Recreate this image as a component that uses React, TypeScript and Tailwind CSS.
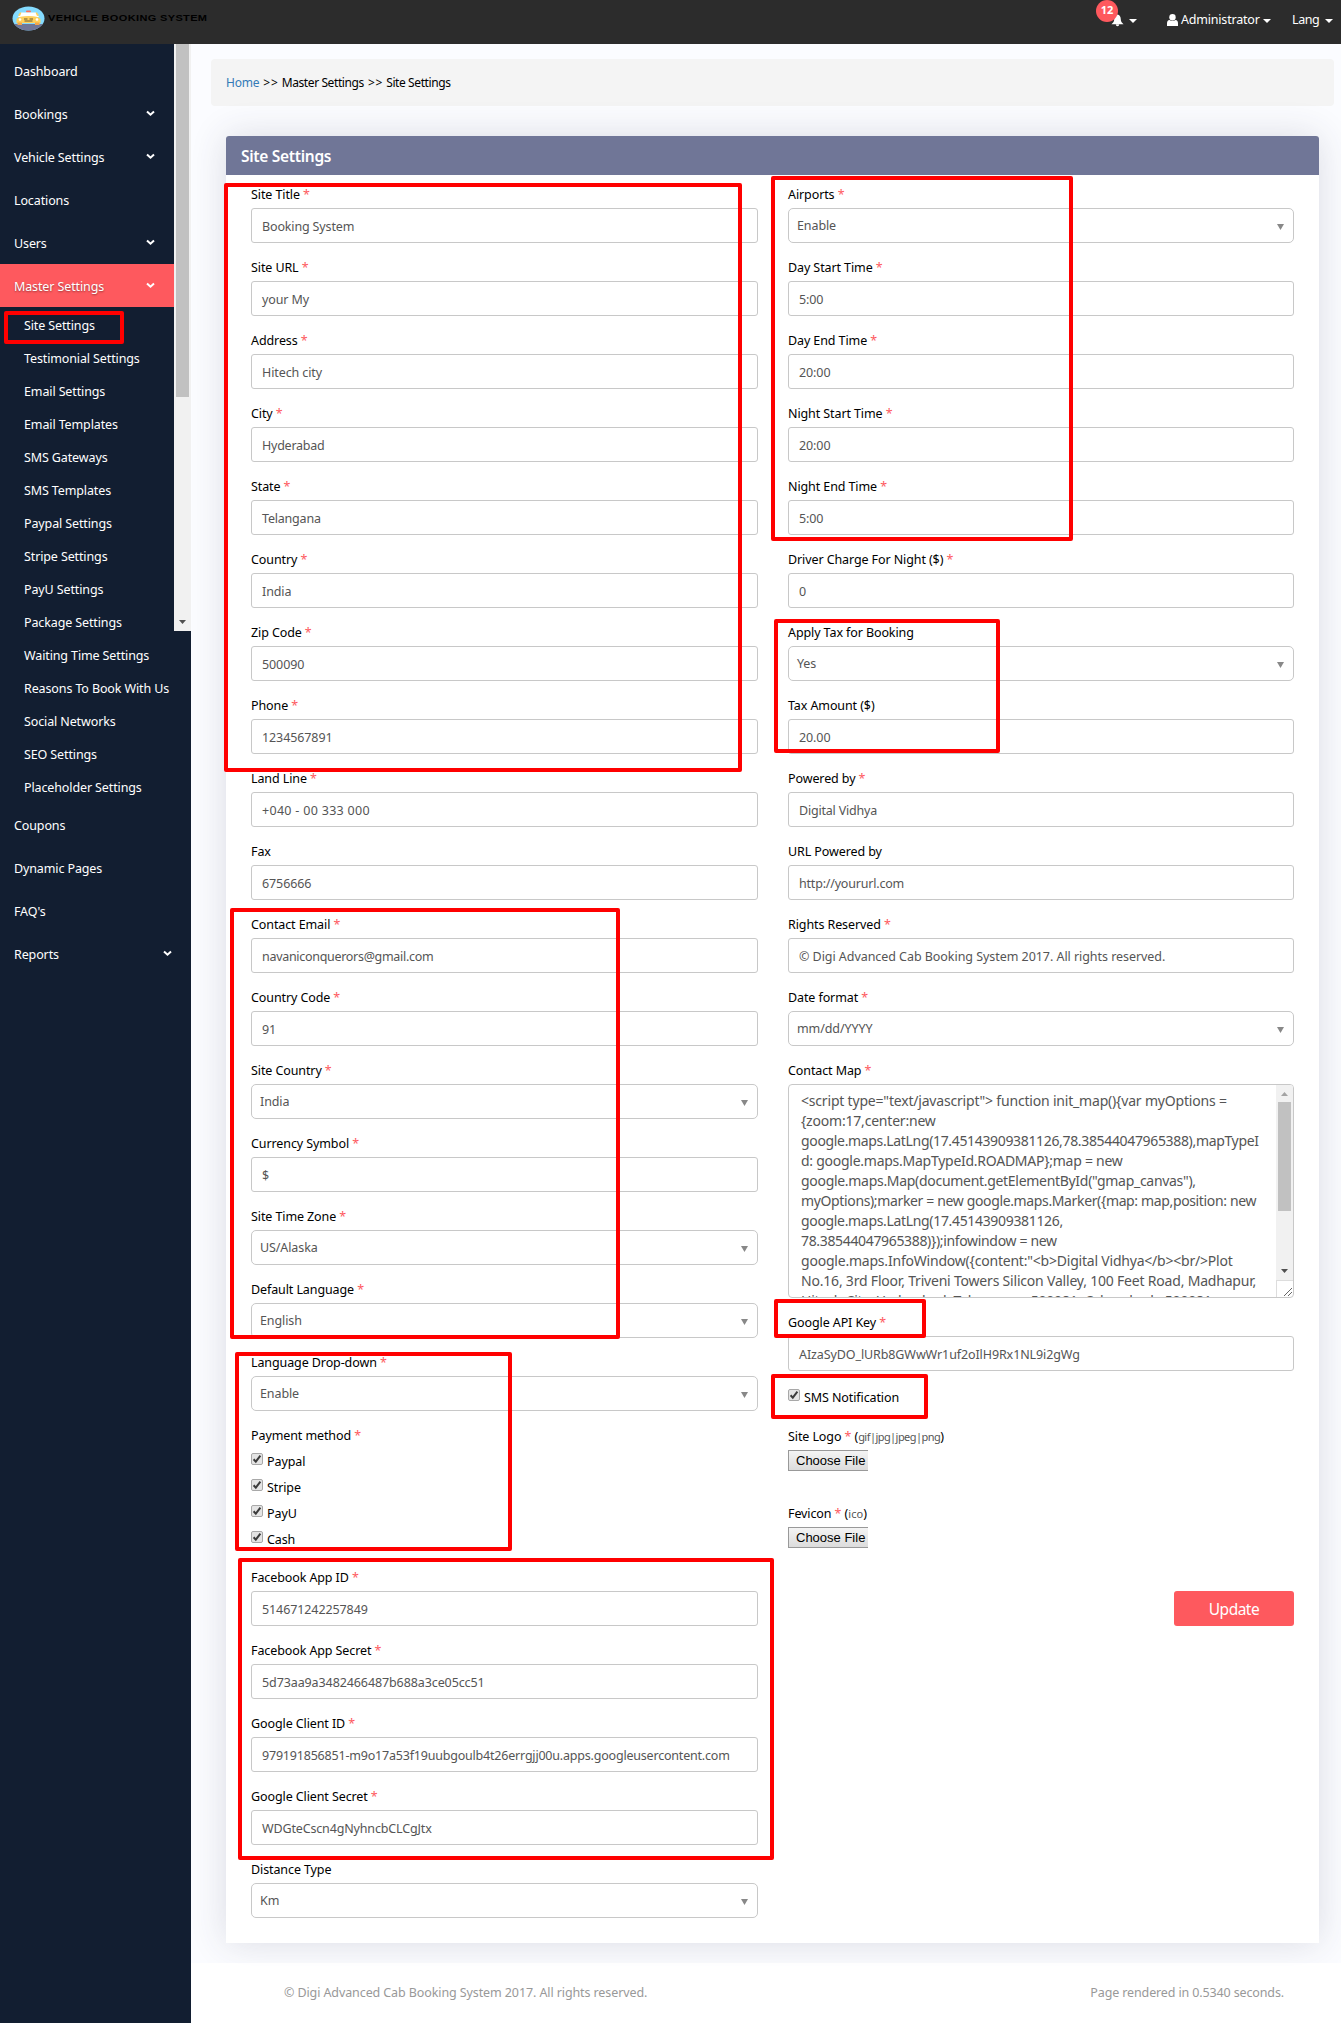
import React from "react";

type FieldDef = {
  label: string;
  value: string;
  kind?: "input" | "select";
  required?: boolean;
  tracking?: string;
};

const f = (label: string, value: string, required = true, tracking = "tracking-[-0.1px]"): FieldDef => ({
  label,
  value,
  required,
  kind: "input",
  tracking,
});
const s = (label: string, value: string, required = true): FieldDef => ({ label, value, required, kind: "select" });

const leftFields: FieldDef[] = [
  f("Site Title", "Booking System", true, "tracking-[-0.15px]"),
  f("Site URL", "your My"),
  f("Address", "Hitech city"),
  f("City", "Hyderabad", true, "tracking-[-0.25px]"),
  f("State", "Telangana", true, "tracking-[-0.2px]"),
  f("Country", "India"),
  f("Zip Code", "500090"),
  f("Phone", "1234567891"),
  f("Land Line", "+040 - 00 333 000", true, "tracking-[0.3px]"),
  f("Fax", "6756666", false),
  f("Contact Email", "navaniconquerors@gmail.com", true, "tracking-[-0.3px]"),
  f("Country Code", "91"),
  s("Site Country", "India"),
  f("Currency Symbol", "$"),
  s("Site Time Zone", "US/Alaska"),
  s("Default Language", "English"),
  s("Language Drop-down", "Enable"),
];

const leftTail: FieldDef[] = [
  f("Facebook App ID", "514671242257849"),
  f("Facebook App Secret", "5d73aa9a3482466487b688a3ce05cc51"),
  f(
    "Google Client ID",
    "979191856851-m9o17a53f19uubgoulb4t26errgjj00u.apps.googleusercontent.com",
    true,
    "tracking-[-0.2px]"
  ),
  f("Google Client Secret", "WDGteCscn4gNyhncbCLCgJtx", true, "tracking-[-0.15px]"),
  s("Distance Type", "Km", false),
];

const rightFields: FieldDef[] = [
  s("Airports", "Enable"),
  f("Day Start Time", "5:00"),
  f("Day End Time", "20:00"),
  f("Night Start Time", "20:00"),
  f("Night End Time", "5:00"),
  f("Driver Charge For Night ($)", "0"),
  s("Apply Tax for Booking", "Yes", false),
  f("Tax Amount ($)", "20.00", false),
  f("Powered by", "Digital Vidhya", true, "tracking-[-0.2px]"),
  f("URL Powered by", "http://yoururl.com", false, "tracking-[-0.2px]"),
  f("Rights Reserved", "© Digi Advanced Cab Booking System 2017. All rights reserved.", true, "tracking-[-0.05px]"),
  s("Date format", "mm/dd/YYYY"),
];

const mapLines: [string, string][] = [
  ['<script type="text/javascript"> function init_map(){var myOptions =', "tracking-[-0.19px]"],
  ["{zoom:17,center:new", "tracking-[-0.2px]"],
  ["google.maps.LatLng(17.45143909381126,78.38544047965388),mapTypeI", "tracking-[-0.34px]"],
  ["d: google.maps.MapTypeId.ROADMAP};map = new", "tracking-[-0.26px]"],
  ['google.maps.Map(document.getElementById("gmap_canvas"),', "tracking-[-0.3px]"],
  ["myOptions);marker = new google.maps.Marker({map: map,position: new", "tracking-[-0.36px]"],
  ["google.maps.LatLng(17.45143909381126,", "tracking-[-0.33px]"],
  ["78.38544047965388)});infowindow = new", "tracking-[-0.34px]"],
  ['google.maps.InfoWindow({content:"<b>Digital Vidhya</b><br/>Plot', "tracking-[-0.21px]"],
  ["No.16, 3rd Floor, Triveni Towers Silicon Valley, 100 Feet Road, Madhapur,", "tracking-[-0.2px]"],
  ["Hitech City, Hyderabad, Telangana - 500081, Cyberabad - 500081", "tracking-[-0.2px]"],
];

const topMenu: [string, boolean][] = [
  ["Dashboard", false],
  ["Bookings", true],
  ["Vehicle Settings", true],
  ["Locations", false],
  ["Users", true],
];

const subMenu = [
  "Site Settings",
  "Testimonial Settings",
  "Email Settings",
  "Email Templates",
  "SMS Gateways",
  "SMS Templates",
  "Paypal Settings",
  "Stripe Settings",
  "PayU Settings",
  "Package Settings",
  "Waiting Time Settings",
  "Reasons To Book With Us",
  "Social Networks",
  "SEO Settings",
  "Placeholder Settings",
];

const bottomMenu: [string, boolean][] = [
  ["Coupons", false],
  ["Dynamic Pages", false],
  ["FAQ's", false],
  ["Reports", true],
];

/* Highlight frames drawn over the page. */
const frames = [
  "left-[4px] top-[311px] w-[120px] h-[33px]",
  "left-[224px] top-[183px] w-[518px] h-[589px]",
  "left-[771px] top-[176px] w-[302px] h-[365px]",
  "left-[774px] top-[619px] w-[226px] h-[134px]",
  "left-[230px] top-[908px] w-[390px] h-[431px]",
  "left-[235px] top-[1352px] w-[277px] h-[199px]",
  "left-[238px] top-[1558px] w-[536px] h-[302px]",
  "left-[774px] top-[1299px] w-[152px] h-[39px]",
  "left-[771px] top-[1374px] w-[157px] h-[45px]",
];

function Chevron() {
  return (
    <svg width="9" height="7" viewBox="0 0 9 7" className="block">
      <path d="M1 1.4 4.500 4.700 8 1.400" fill="none" stroke="#fff" strokeWidth="2" />
    </svg>
  );
}

function Caret() {
  return (
    <svg width="8" height="4" viewBox="0 0 8 4" className="block">
      <path d="M0 0h8L4 4z" fill="#fff" />
    </svg>
  );
}

function Label({ text, required }: { text: string; required?: boolean }) {
  return (
    <div className="h-5 whitespace-nowrap text-[12.5px] leading-[21px] tracking-[-0.1px] text-black">
      {text}
      {required && <span className="text-[#fe595e]"> *</span>}
    </div>
  );
}

function Field({ label, value, kind, required, tracking = "tracking-[-0.1px]" }: FieldDef) {
  return (
    <div className="mb-3.5">
      <Label text={label} required={required} />
      {kind === "select" ? (
        <div className="mt-1 flex h-[35px] items-center justify-between rounded-[5px] border border-[#c8c8c8] bg-white pl-2 pr-[9px] text-[12.5px] tracking-[-0.1px] text-[#555]">
          <span className="pt-[2px]">{value}</span>
          <svg width="7" height="6" viewBox="0 0 7 6" className="mt-[2px]">
            <path d="M0 0h7L3.500 6z" fill="#888" />
          </svg>
        </div>
      ) : (
        <div
          className={
            "mt-1 flex h-[35px] items-center whitespace-nowrap rounded-[3px] border border-[#c8c8c8] bg-white pl-[10px] pt-[4px] text-[12.5px] text-[#555] " +
            tracking
          }
        >
          {value}
        </div>
      )}
    </div>
  );
}

function Check({ text }: { text: string }) {
  return (
    <div className="flex h-[26px] items-start text-[12.5px] tracking-[-0.1px] text-black">
      <svg width="12" height="13" viewBox="0 0 12 13" className="mt-[4px] shrink-0">
        <rect x="0.5" y="0.5" width="11" height="11" rx="1.5" fill="#e4e4e4" stroke="#a8a8a8" />
        <path d="M2.600 6.200 4.800 8.600 9.400 2.600" fill="none" stroke="#3c3c3c" strokeWidth="2" />
      </svg>
      <span className="ml-[4px] leading-[26px]">{text}</span>
    </div>
  );
}

function FileRow({ label, hint }: { label: string; hint: string }) {
  return (
    <div>
      <div className="h-5 whitespace-nowrap text-[12.5px] leading-[20px] tracking-[-0.1px] text-black">
        {label}
        <span className="text-[#fe595e]"> *</span> (
        <span className={"text-[11px] text-[#555] " + (hint.length > 5 ? "tracking-[-0.55px]" : "tracking-[0.1px]")}>{hint}</span>)
      </div>
      <div className="mt-[3px] h-[21px] w-[80px] whitespace-nowrap border border-r-0 border-[#999] bg-gradient-to-b from-[#f4f4f4] to-[#dcdcdc] pl-[7px] font-['Liberation_Sans'] text-[13px] leading-[19px] text-black">
        Choose File
      </div>
    </div>
  );
}

function MenuItem({ text, arrow, wide }: { text: string; arrow: boolean; wide: string }) {
  return (
    <div className={"flex h-[43px] items-center justify-between pl-[14px] " + wide}>
      <span className="pt-[3px] leading-none">{text}</span>
      {arrow && <Chevron />}
    </div>
  );
}

function Logo() {
  return (
    <div className="flex items-center">
      <svg width="33" height="25" viewBox="0 0 33 25">
        <defs>
          <clipPath id="disc">
            <ellipse cx="16.5" cy="12.5" rx="16" ry="12" />
          </clipPath>
        </defs>
        <g clipPath="url(#disc)">
          <rect width="33" height="25" fill="#84dbff" />
          <rect y="18" width="33" height="8" fill="#707697" />
          <rect x="14" y="4.500" width="5" height="2" rx="1" fill="#ff7058" />
          <path d="M9 6.500h15l3 4.500H6z" fill="#fff" />
          <path d="M4.500 13q2-3 12-3T28.500 13v4H4.500z" fill="#ffd05b" />
          <path d="M6 9.500 8 6.500h1.500L8 10zM27 9.500 25 6.500h-1.500L25 10z" fill="#ffd05b" />
          <path d="M5.500 16.500h4.500V19H5.500zM23 16.500h4.500V19H23z" fill="#f1a64c" />
          <path d="M12 13h3.500M17.500 13H21M12.500 15h8" stroke="#6b5a34" strokeWidth="1" />
          <circle cx="8" cy="13.500" r="1.300" fill="#fff" />
          <circle cx="25" cy="13.500" r="1.300" fill="#fff" />
        </g>
      </svg>
      <span className="ml-[3px] inline-block w-[131px] origin-left scale-x-[1.22] whitespace-nowrap font-['Liberation_Sans'] text-[9px] font-bold tracking-[0.3px] text-black">
        VEHICLE BOOKING SYSTEM
      </span>
    </div>
  );
}

export default function App() {
  return (
    <div className="relative flex h-[2023px] w-[1341px] flex-col overflow-hidden bg-white font-['Noto_Sans',sans-serif]">
      <header className="flex h-[44px] shrink-0 items-start bg-[#2c2c2c] pl-[12px] pt-[6px] text-white">
        <Logo />
        <div className="ml-auto flex h-[28px] items-center text-[12.5px]">
          <div className="relative flex items-center">
            <svg width="13" height="13" viewBox="0 0 14 14">
              <path
                d="M7 0.500C4.500 1 3.500 3 3.500 5.500 3.500 8 2.500 9.500 0.500 11h13C11.500 9.500 10.500 8 10.500 5.500 10.500 3 9.500 1 7 .5zM5.200 11.400h3.600a1.800 1.800 0 0 1-3.600 0z"
                fill="#fff"
              />
            </svg>
            <span className="absolute -left-[15px] -top-[14px] flex h-[22px] w-[22px] items-center justify-center rounded-full bg-[#fe595e] text-[11px] font-bold">
              12
            </span>
            <span className="ml-[5px] mt-[2px]">
              <Caret />
            </span>
          </div>
          <div className="ml-[30px] flex items-center">
            <svg width="11" height="12" viewBox="0 0 11 12">
              <circle cx="5.500" cy="3.300" r="3.200" fill="#fff" />
              <path d="M0 12V9.500Q0 6.200 2.500 6q3 1.700 6 0Q11 6.200 11 9.500V12z" fill="#fff" />
            </svg>
            <span className="ml-[3px] w-[79px] tracking-[-0.2px]">Administrator</span>
            <span className="ml-[3px] mt-[2px]">
              <Caret />
            </span>
          </div>
          <div className="ml-[21px] mr-[8px] flex items-center">
            <span className="w-[27px] tracking-[-0.4px]">Lang</span>
            <span className="ml-[6px] mt-[2px]">
              <Caret />
            </span>
          </div>
        </div>
      </header>

      <div className="flex min-h-0 flex-1">
        <aside className="relative w-[191px] shrink-0 bg-[#121e31] text-[12.5px] tracking-[-0.12px] text-white">
          <div className="absolute right-0 top-0 flex h-[587px] w-[17px] flex-col items-center justify-between bg-[#f1f1f1] pb-[7px]">
            <div className="h-[353px] w-[13px] bg-[#c1c1c1]" />
            <svg width="7" height="4" viewBox="0 0 7 4">
              <path d="M0 0h7L3.500 4z" fill="#505050" />
            </svg>
          </div>
          <nav className="relative pt-[5px]">
            {topMenu.map(([t, a]) => (
              <MenuItem key={t} text={t} arrow={a} wide="pr-[36px]" />
            ))}
            <div className="w-[174px] bg-[#fe595e] [text-shadow:0_1px_2px_rgba(0,0,0,.4)]">
              <MenuItem text="Master Settings" arrow wide="pr-[19px]" />
            </div>
            <div className="-mb-px pt-[2px]">
              {subMenu.map((t) => (
                <div key={t} className="flex h-[33px] items-center whitespace-nowrap pl-[24px] pt-[2px] leading-none">
                  {t}
                </div>
              ))}
            </div>
            {bottomMenu.map(([t, a]) => (
              <MenuItem key={t} text={t} arrow={a} wide="pr-[19px]" />
            ))}
          </nav>
        </aside>

        <main className="flex flex-1 flex-col">
          <div className="h-[1919px] bg-[#fbfcff] pl-[20px] pr-[7px] pt-[15px]">
            <div className="flex h-[47px] items-center whitespace-nowrap rounded-[4px] bg-[#f4f4f4] pl-[15px] pt-px text-[12px] tracking-[-0.4px] text-black">
              <span className="tracking-[-0.2px] text-[#337ab7]">Home</span>
              <span className="ml-[4px] mr-[3px] tracking-[0.8px]">&gt;&gt;</span>
              <span>Master Settings</span>
              <span className="ml-[4px] mr-[3px] tracking-[0.8px]">&gt;&gt;</span>
              <span>Site Settings</span>
            </div>

            <section className="ml-[15px] mr-[15px] mt-[30px] h-[1807px] rounded-t-[3px] bg-white shadow-[0_0_36px_rgba(50,50,80,0.16)]">
              <h1 className="flex h-[39px] items-center rounded-t-[3px] bg-[#707697] pl-[15px] pt-[3px] text-[15.5px] font-semibold tracking-[-0.3px] text-white">
                Site Settings
              </h1>
              <div className="flex pl-[25px] pt-[9px]">
                <div className="w-[507px]">
                  {leftFields.map((d) => (
                    <Field key={d.label} {...d} />
                  ))}
                  <Label text="Payment method" required />
                  <div className="mb-3.5 mt-1">
                    {["Paypal", "Stripe", "PayU", "Cash"].map((t) => (
                      <Check key={t} text={t} />
                    ))}
                  </div>
                  {leftTail.map((d) => (
                    <Field key={d.label} {...d} />
                  ))}
                </div>
                <div className="ml-[30px] w-[506px]">
                  {rightFields.map((d) => (
                    <Field key={d.label} {...d} />
                  ))}
                  <Label text="Contact Map" required />
                  <div className="mb-3.5 mt-1 flex h-[214px] overflow-hidden rounded-[4px] border border-[#c8c8c8] bg-white">
                    <div className="flex-1 overflow-hidden pl-[12px] pt-[6px] text-[14px] leading-5 text-[#555]">
                      {mapLines.map(([l, t]) => (
                        <div key={l} className={"whitespace-pre " + t}>
                          {l}
                        </div>
                      ))}
                    </div>
                    <div className="flex w-[17px] shrink-0 flex-col">
                      <div className="flex flex-1 flex-col items-center bg-[#f1f1f1]">
                        <svg width="7" height="4" viewBox="0 0 7 4" className="mt-[7px]">
                          <path d="M0 4h7L3.500 0z" fill="#a3a3a3" />
                        </svg>
                        <div className="mt-[6px] h-[109px] w-[13px] bg-[#c1c1c1]" />
                        <svg width="7" height="4" viewBox="0 0 7 4" className="mb-[7px] mt-auto">
                          <path d="M0 0h7L3.500 4z" fill="#505050" />
                        </svg>
                      </div>
                      <div className="flex h-[17px] items-end justify-end border-l border-t border-[#ddd]">
                        <svg width="10" height="10" viewBox="0 0 10 10">
                          <path d="M1 9 9 1M5 9l4-4" stroke="#666" fill="none" />
                        </svg>
                      </div>
                    </div>
                  </div>
                  <Field label="Google API Key" value="AIzaSyDO_lURb8GWwWr1uf2oIlH9Rx1NL9i2gWg" required />
                  <Check text="SMS Notification" />
                  <div className="mt-4">
                    <FileRow label="Site Logo" hint="gif|jpg|jpeg|png" />
                  </div>
                  <div className="mt-[33px]">
                    <FileRow label="Fevicon" hint="ico" />
                  </div>
                  <button className="ml-auto mt-[43px] flex h-[35px] w-[120px] items-center justify-center rounded-[3px] bg-[#fe595e] pt-[2px] text-[15.5px] tracking-[-0.5px] text-white">
                    Update
                  </button>
                </div>
              </div>
            </section>
          </div>
          <footer className="relative flex h-[60px] items-center justify-between whitespace-nowrap bg-white/85 pl-[93px] pr-[57px] text-[12.5px] tracking-[-0.1px] text-[#999]">
            <span>© Digi Advanced Cab Booking System 2017. All rights reserved.</span>
            <span className="tracking-[-0.13px]">Page rendered in 0.5340 seconds.</span>
          </footer>
        </main>
      </div>

      {frames.map((c) => (
        <div key={c} className={"absolute rounded-[2px] border-4 border-[#ff0000] " + c} />
      ))}
    </div>
  );
}
